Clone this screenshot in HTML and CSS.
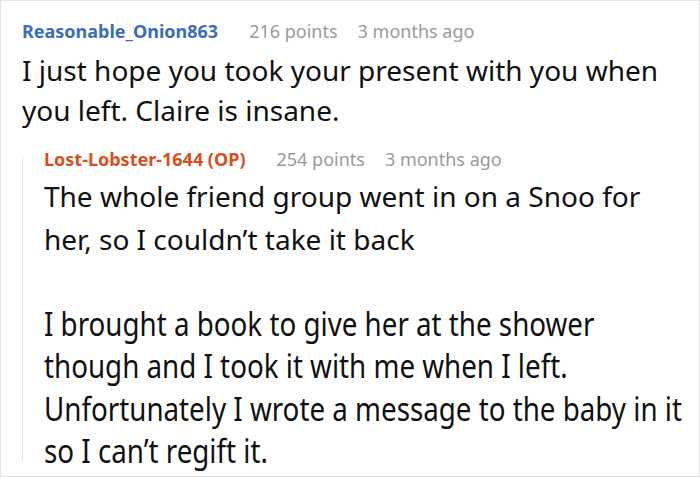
FILE: index.html
```html
<!DOCTYPE html>
<html>
<head>
<meta charset="utf-8">
<link rel="stylesheet" href="styles.css">
</head>
<body>
<div class="thread">
  <div class="comment">
    <div class="meta">
      <span class="author author-blue">Reasonable_Onion863</span>
      <span class="info">216 points</span>
      <span class="info">3 months ago</span>
    </div>
    <p class="body">I just hope you took your present with you when you left. Claire is insane.</p>
    <div class="reply">
      <div class="meta">
        <span class="author author-orange">Lost-Lobster-1644 (OP)</span>
        <span class="info">254 points</span>
        <span class="info">3 months ago</span>
      </div>
      <p class="body reply-body">The whole friend group went in on a Snoo for her, so I couldn’t take it back</p>
      <p class="body reply-body narrow">I brought a book to give her at the shower<br>though and I took it with me when I left.<br>Unfortunately I wrote a message to the baby in it<br>so I can’t regift it.</p>
    </div>
  </div>
</div>
</body>
</html>
```

FILE: styles.css
```css
html, body {
  margin: 0;
  padding: 0;
  background: #ffffff;
}
.thread {
  box-sizing: border-box;
  width: 700px;
  height: 477px;
  border: 1px solid #e4e4e4;
  overflow: hidden;
  font-family: "Noto Sans", "Open Sans", sans-serif;
  color: #111111;
}
.comment {
  padding: 17px 0 0 21px;
}
.meta {
  display: flex;
  align-items: baseline;
  font-size: 18px;
  line-height: 26px;
}
.author {
  font-weight: 700;
  margin-right: 31px;
}
.author-blue { color: #3d6db8; }
.author-orange { color: #d5501e; }
.info {
  color: #9a9a9a;
  margin-right: 20px;
}
.body {
  margin: 6px 0 0;
  font-size: 28px;
  line-height: 40px;
  padding-right: 20px;
}
.reply {
  margin-top: 16px;
  padding-left: 22px;
  background: linear-gradient(#e2e2e2, #e2e2e2) no-repeat 0 11px / 1px calc(100% - 23.5px);
}
.reply-body {
  font-size: 28px;
  line-height: 42.5px;
  margin-top: 3px;
}
.reply-body + .reply-body {
  margin-top: 42.5px;
}
.narrow {
  white-space: nowrap;
  font-size: 32px;
  transform: scaleX(0.867);
  transform-origin: 0 0;
}
```
